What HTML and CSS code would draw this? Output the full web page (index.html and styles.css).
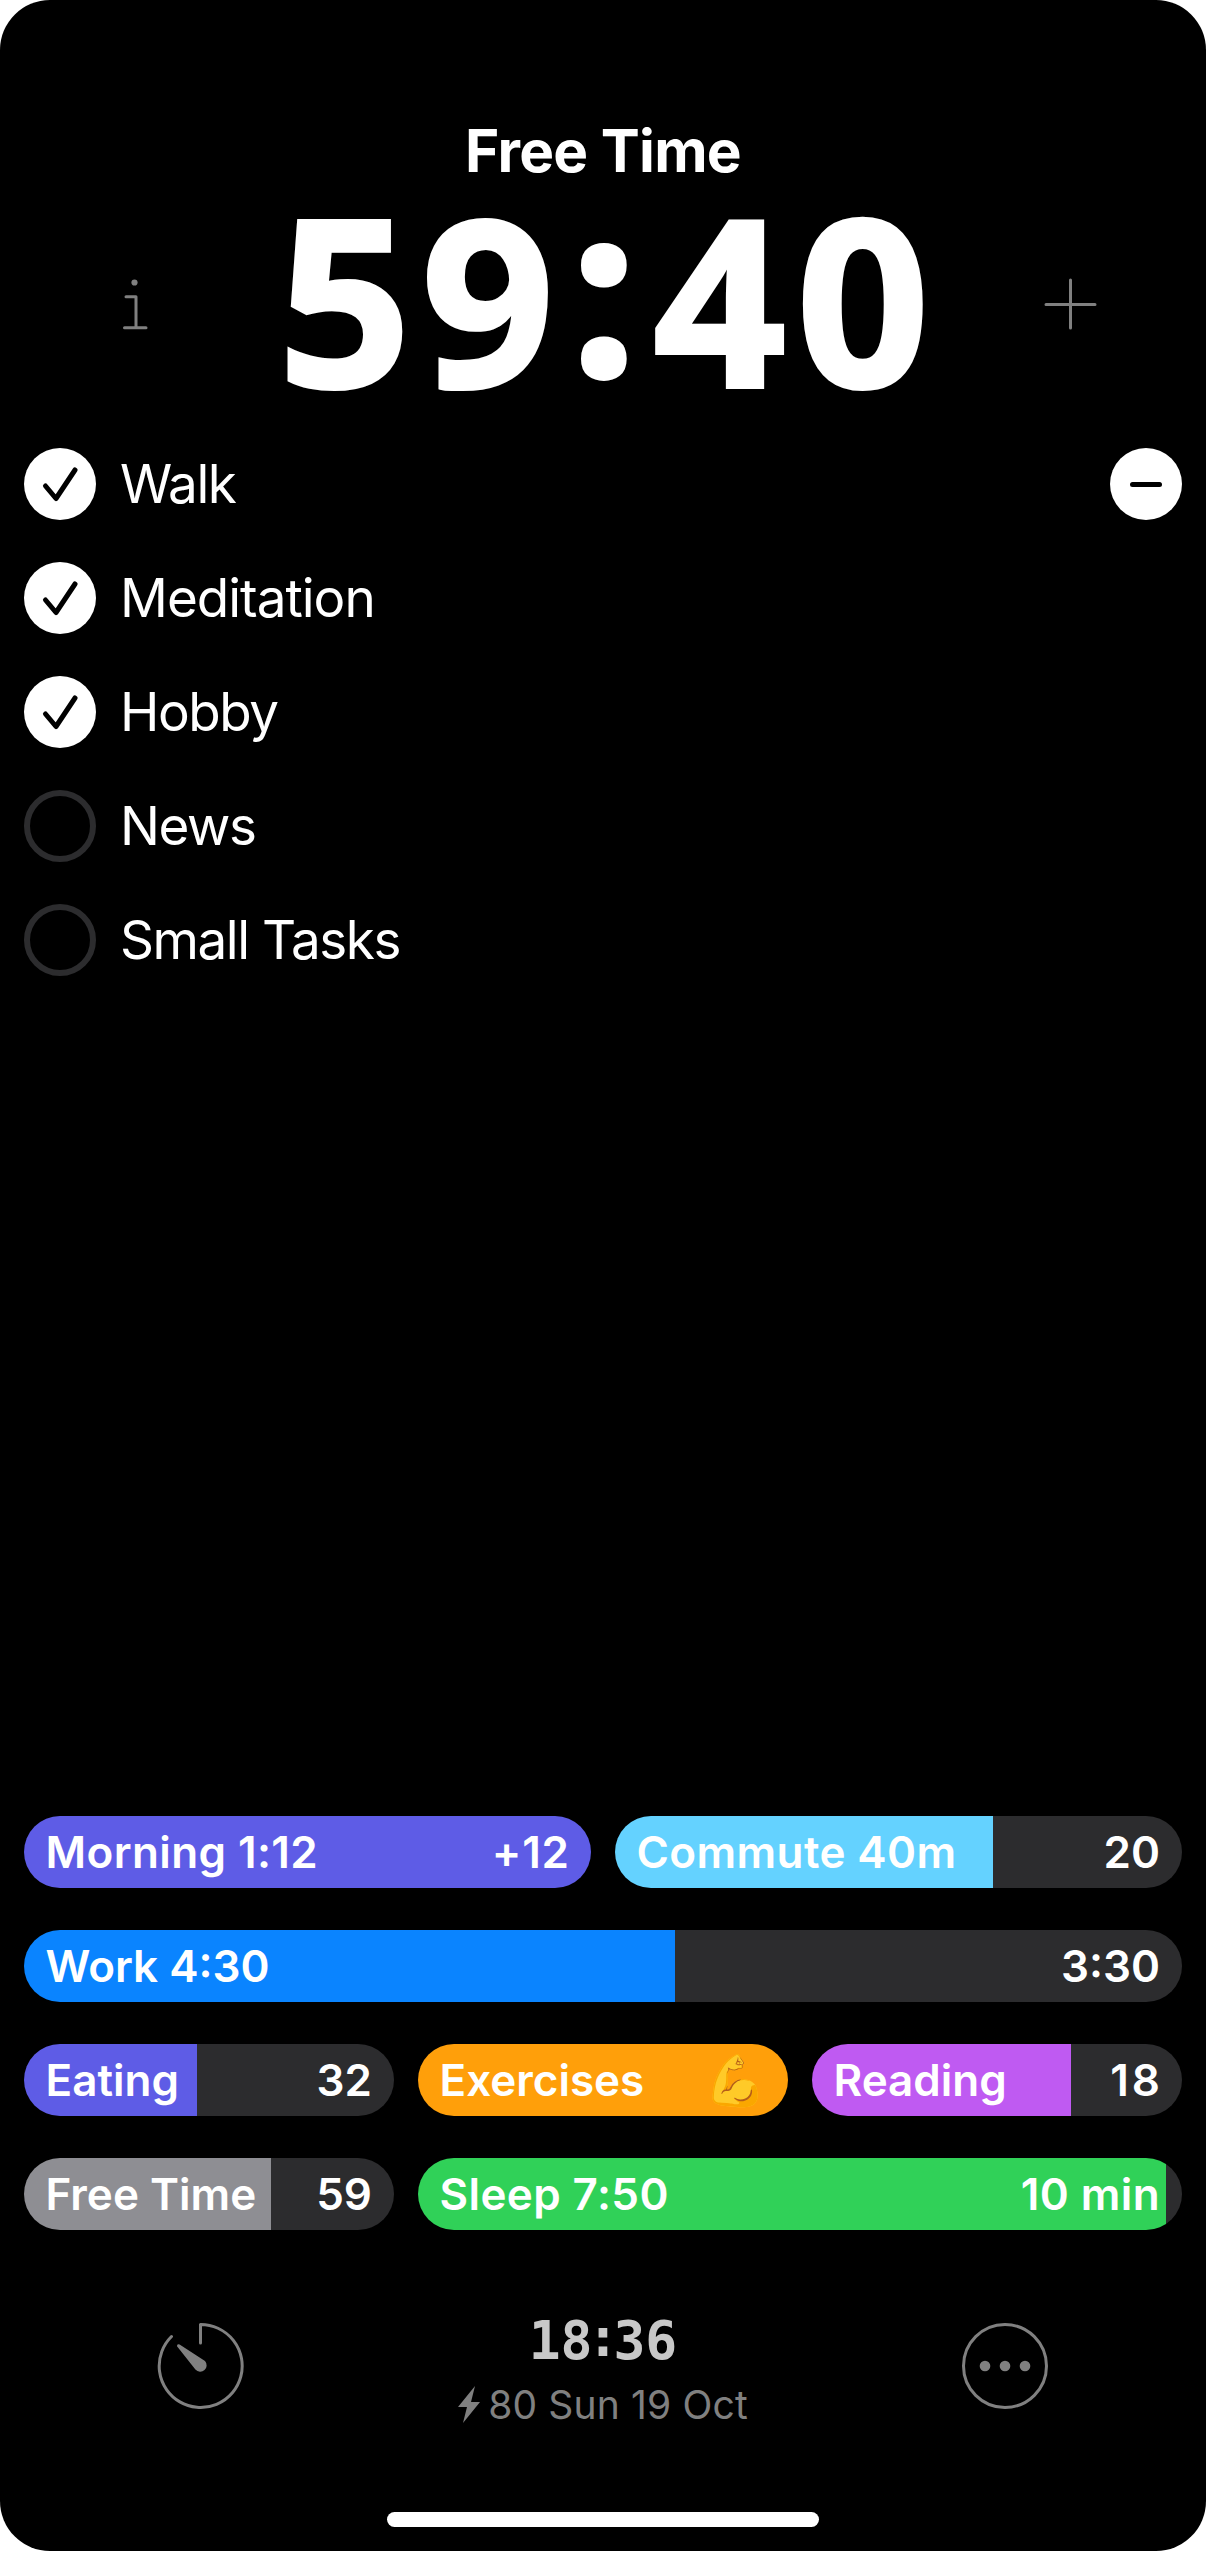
FILE: index.html
```html
<!DOCTYPE html>
<html lang="en">
<head>
<meta charset="utf-8">
<title>Free Time</title>
<link rel="stylesheet" href="styles.css">
</head>
<body>
<main class="screen">
  <header class="header">
    <h1 class="title">Free Time</h1>
    <div class="timer-row">
      <svg class="icon-info" viewBox="0 0 28 54" width="28" height="54"><circle cx="14.5" cy="5.5" r="3.1"/><path d="M6 19.7H16V50.7M4.5 50.7H26"/></svg>
      <div class="timer"><span>59</span><span class="colon">:</span><span>40</span></div>
      <svg class="icon-plus" viewBox="0 0 54 54" width="54" height="54"><path d="M26.5 3V51M2 27.5H51"/></svg>
    </div>
  </header>
  <div class="tasks">
    <ul class="task-list">
      <li class="task"><span class="check done"><svg viewBox="0 0 72 72"><path d="M21.5 38L32 50.5L51 22"/></svg></span><span class="label">Walk</span></li>
      <li class="task"><span class="check done"><svg viewBox="0 0 72 72"><path d="M21.5 38L32 50.5L51 22"/></svg></span><span class="label medium">Meditation</span></li>
      <li class="task"><span class="check done"><svg viewBox="0 0 72 72"><path d="M21.5 38L32 50.5L51 22"/></svg></span><span class="label">Hobby</span></li>
      <li class="task"><span class="check"></span><span class="label">News</span></li>
      <li class="task"><span class="check"></span><span class="label">Small Tasks</span></li>
    </ul>
    <span class="check done"><svg viewBox="0 0 72 72"><path d="M22.5 36.5H49.5"/></svg></span>
  </div>
  <section class="activities">
    <div class="row halves">
      <div class="pill indigo" style="--fill:100%"><span class="loose">Morning 1:12</span><span class="looser">+12</span></div>
      <div class="pill cyan" style="--fill:66.67%"><span class="loose">Commute 40m</span><span>20</span></div>
    </div>
    <div class="row">
      <div class="pill blue" style="--fill:56.2%"><span>Work 4:30</span><span>3:30</span></div>
    </div>
    <div class="row thirds">
      <div class="pill indigo" style="--fill:46.75%"><span>Eating</span><span>32</span></div>
      <div class="pill orange" style="--fill:100%"><span>Exercises</span><span class="emoji">💪</span></div>
      <div class="pill purple" style="--fill:70%"><span>Reading</span><span class="eighteen">18</span></div>
    </div>
    <div class="row thirds">
      <div class="pill gray" style="--fill:66.75%"><span>Free Time</span><span>59</span></div>
      <div class="pill green wide" style="--fill:97.9%"><span class="loose">Sleep 7:50</span><span class="loose">10 min</span></div>
    </div>
  </section>
  <footer class="footer">
    <svg class="icon-round" viewBox="0 0 88 88" width="88" height="88"><path d="M43.5 21V2.5A41.5 41.5 0 1 1 14.5 14.5"/><path class="solid" d="M20 24.2Q19.8 21.4 22.6 22.4L48 39A6 6 0 1 1 38.4 47.6Z"/></svg>
    <div class="status">
      <div class="clock"><span>18</span><span class="colon">:</span><span>36</span></div>
      <div class="date"><svg class="bolt" viewBox="0 0 22 38" width="22" height="38"><path d="M17 0L0 21H9L5 37L22 16H13Z"/></svg><span>80 Sun 19 Oct</span></div>
    </div>
    <svg class="icon-round" viewBox="0 0 88 88" width="88" height="88"><circle cx="44" cy="44" r="41.5"/><g class="solid"><circle cx="24" cy="44" r="5.3"/><circle cx="44" cy="44" r="5.3"/><circle cx="64" cy="44" r="5.3"/></g></svg>
  </footer>
  <div class="home-bar"></div>
</main>
</body>
</html>
```
FILE: styles.css
```css
* { box-sizing: border-box; }
body { margin: 0; background: #fff; font-family: Inter, "Liberation Sans", sans-serif; color: #fff; }
.screen { width: 1206px; height: 2551px; background: #000; border-radius: 50px; display: flex; flex-direction: column; overflow: hidden; }
.header { height: 448px; padding-top: 115px; flex: none; }
.title { margin: 0; height: 73px; line-height: 72px; font-size: 58.5px; font-weight: 700; letter-spacing: -0.7px; text-align: center; }
.timer-row { display: flex; justify-content: space-between; align-items: center; height: 232px; padding: 0 108px 0 120px; }
.timer { display: flex; padding: 0 0 14px 26px; font: 700 232px/232px "Open Sans", "Noto Sans", sans-serif; letter-spacing: 10.5px; -webkit-text-stroke: 4px #fff; }
.timer .colon { padding: 0 6px; margin-top: -12px; -webkit-text-stroke-width: 6px; }
svg { display: block; fill: none; stroke: #808080; stroke-width: 3; stroke-linecap: round; stroke-linejoin: round; flex: none; }
.icon-info circle { fill: #808080; stroke: none; }
.tasks { display: flex; justify-content: space-between; align-items: flex-start; padding: 0 24px; }
.task-list { list-style: none; margin: 0; padding: 0; display: flex; flex-direction: column; gap: 42px; }
.task { display: flex; align-items: center; gap: 24px; height: 72px; font-size: 53px; letter-spacing: -1.45px; }
.label { white-space: nowrap; }
.label.medium { letter-spacing: -1px; }
.check { width: 72px; height: 72px; border-radius: 50%; border: 6px solid #2c2c2e; flex: none; }
.check.done { border: 0; background: #fff; }
.check svg { width: 72px; height: 72px; stroke: #000; stroke-width: 5; }
.activities { margin-top: auto; padding: 0 24px; display: flex; flex-direction: column; gap: 42px; }
.row { display: grid; gap: 24px; }
.halves { grid-template-columns: 1fr 1fr; }
.thirds { grid-template-columns: 1fr 1fr 1fr; }
.wide { grid-column: span 2; }
.pill { height: 72px; border-radius: 36px; padding: 0 22px 0 21.5px; display: flex; align-items: center; justify-content: space-between; font-size: 44px; font-weight: 600; white-space: nowrap; background: linear-gradient(to right, var(--tint) var(--fill), #2c2c2e var(--fill)); }
.loose { letter-spacing: 0.4px; }
.looser { letter-spacing: 0.8px; margin-right: -0.8px; }
.eighteen { letter-spacing: 3px; margin-right: -3px; }
.emoji { font-size: 50px; line-height: 72px; }
.indigo { --tint: #5e5ce6; }
.cyan { --tint: #64d2ff; }
.blue { --tint: #0a84ff; }
.orange { --tint: #ff9f0a; }
.purple { --tint: #bf5af2; }
.gray { --tint: #8e8e93; }
.green { --tint: #30d158; }
.footer { height: 282px; padding: 92px 157px 0; display: flex; justify-content: space-between; align-items: flex-start; flex: none; }
.solid { fill: #808080; stroke: none; }
.status { display: flex; flex-direction: column; align-items: center; margin-top: -13px; }
.clock { display: flex; color: #c8c8c8; font: 700 53px/64px "DejaVu Sans Mono", monospace; }
.clock .colon { margin: -3px -5.5px 0; }
.date { display: flex; align-items: center; gap: 8px; color: #808080; font-size: 39px; line-height: 64px; letter-spacing: 0.15px; }
.bolt { fill: #808080; stroke: none; }
.home-bar { width: 432px; height: 15px; border-radius: 8px; background: #fff; margin: 0 auto 24px; flex: none; }
```
